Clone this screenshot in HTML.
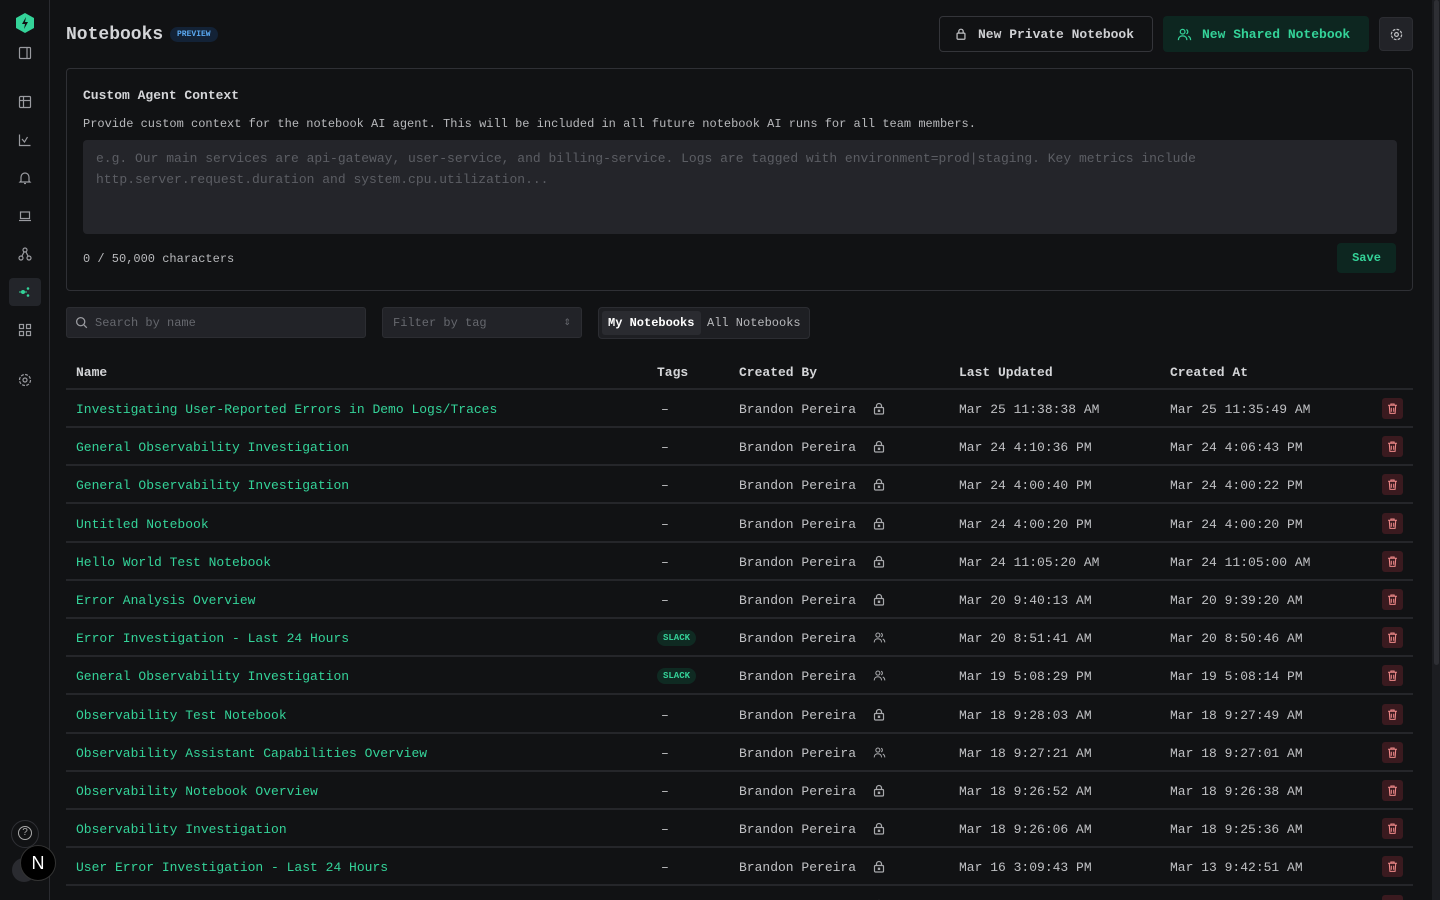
<!DOCTYPE html>
<html style="width:1440px;height:900px;overflow:hidden"><head><meta charset="utf-8"><style>
*{box-sizing:border-box;margin:0;padding:0}
body{width:1440px;height:900px;overflow:hidden;background:#111214;font-family:"Liberation Mono",monospace;color:#c9cacd;position:relative}
.abs{position:absolute}
.side{left:0;top:0;width:50px;height:900px;border-right:1px solid #2a2b30;background:#111214}
.ic{position:absolute;left:17px;width:16px;height:16px}
.ic svg{width:16px;height:16px;display:block}
.btn{position:absolute;height:36px;border-radius:4px;font-size:13px;font-weight:bold;display:flex;align-items:center}
.row{position:absolute;left:66px;width:1347px;height:38px;border-bottom:2px solid #25262a;font-size:13px}
.row span{position:absolute;top:12px;white-space:nowrap}
.nm{left:10px;color:#34d399}
.tg{left:595px;color:#c9cacd}
.by{left:673px;color:#c0c1c4}
.lk{left:807px;top:12px!important}
.lu{left:893px;color:#c0c1c4}
.ca{left:1104px;color:#c0c1c4}
.del{position:absolute;left:1316px;top:8px;width:21px;height:21px;background:#3a1a1f;border-radius:3px}
.slack{position:absolute;left:591px;top:11px;font-size:9px;font-weight:bold;color:#34d399;background:#0f2a22;border-radius:8px;padding:3px 6px}
</style></head><body>
<div class="abs side">
 <svg class="abs" style="left:14px;top:12px" width="22" height="22" viewBox="0 0 22 22"><polygon points="11,1 20,6 20,16 11,21 2,16 2,6" fill="#34d399"/><path d="M12 5 L8 12 H11 L10 17 L14 10 H11 Z" fill="#111214"/></svg>
 <div class="ic" style="top:45px"><svg viewBox="0 0 16 16" fill="none" stroke="#9a9ba0" stroke-width="1.2"><rect x="2.5" y="2.5" width="11" height="11" rx="1"/><line x1="10" y1="2.5" x2="10" y2="13.5"/></svg></div>
 <div class="ic" style="top:94px"><svg viewBox="0 0 16 16" fill="none" stroke="#9a9ba0" stroke-width="1.2"><rect x="2.5" y="2.5" width="11" height="11" rx="1"/><line x1="2.5" y1="6.5" x2="13.5" y2="6.5"/><line x1="6.5" y1="2.5" x2="6.5" y2="13.5"/></svg></div>
 <div class="ic" style="top:132px"><svg viewBox="0 0 16 16" fill="none" stroke="#9a9ba0" stroke-width="1.2"><path d="M2.5 2.5V13.5H13.5"/><path d="M5 7l2.5 3 3-5"/></svg></div>
 <div class="ic" style="top:170px"><svg viewBox="0 0 16 16" fill="none" stroke="#9a9ba0" stroke-width="1.2"><path d="M4 11V7a4 4 0 0 1 8 0v4l1 1H3z"/><path d="M7 13.5h2"/></svg></div>
 <div class="ic" style="top:208px"><svg viewBox="0 0 16 16" fill="none" stroke="#9a9ba0" stroke-width="1.2"><rect x="3.5" y="4" width="9" height="6.5"/><line x1="2" y1="12.5" x2="14" y2="12.5"/></svg></div>
 <div class="ic" style="top:246px"><svg viewBox="0 0 16 16" fill="none" stroke="#9a9ba0" stroke-width="1.2"><circle cx="8" cy="4" r="2"/><circle cx="4" cy="12" r="2"/><circle cx="12" cy="12" r="2"/><path d="M7 6l-2 4M9 6l2 4"/></svg></div>
 <div class="abs" style="left:9px;top:278px;width:32px;height:28px;background:#23252a;border-radius:4px"></div>
 <div class="ic" style="top:284px"><svg viewBox="0 0 16 16" fill="#34d399"><circle cx="6" cy="8" r="2"/><circle cx="11" cy="4.5" r="1.3"/><circle cx="11" cy="11.5" r="1.3"/><path d="M2 8h8" stroke="#34d399" stroke-width="1"/></svg></div>
 <div class="ic" style="top:322px"><svg viewBox="0 0 16 16" fill="none" stroke="#9a9ba0" stroke-width="1.2"><rect x="2.5" y="2.5" width="4" height="4"/><rect x="9.5" y="2.5" width="4" height="4"/><rect x="2.5" y="9.5" width="4" height="4"/><rect x="9.5" y="9.5" width="4" height="4"/></svg></div>
 <div class="ic" style="top:372px"><svg viewBox="0 0 16 16" fill="none" stroke="#9a9ba0" stroke-width="1.2"><circle cx="8" cy="8" r="2"/><circle cx="8" cy="8" r="5.5" stroke-dasharray="3 1.3"/></svg></div>
 <div class="abs" style="left:11px;top:820px;width:28px;height:28px;border-radius:50%;border:1px solid #2f3035"></div>
 <div class="abs" style="left:18px;top:826px;width:14px;height:14px;border-radius:50%;border:1.3px solid #aaa;font-size:10px;text-align:center;line-height:12px;color:#aaa;font-family:'Liberation Sans'">?</div>
 <div class="abs" style="left:12px;top:858px;width:24px;height:24px;border-radius:50%;background:#2a2b30"></div>
 <div class="abs" style="left:20px;top:845px;width:36px;height:36px;border-radius:50%;background:#000;border:1px solid #333;color:#fff;font-family:'Liberation Sans';font-size:18px;text-align:center;line-height:34px">N</div>
</div>
<div class="abs" style="left:1432px;top:0;width:8px;height:900px;background:#1c1d21"><div style="margin:0 auto;width:5px;height:665px;background:#2e2f34;border-radius:3px"></div></div>

<div class="abs" style="left:66px;top:25px;font-size:18px;font-weight:bold;color:#d4d5d8">Notebooks</div>
<div class="abs" style="left:170px;top:27px;height:15px;padding:0 7px;border-radius:8px;background:#132236;color:#5aa8f0;font-size:8px;font-weight:bold;line-height:15px">PREVIEW</div>

<div class="btn" style="left:939px;top:16px;width:214px;border:1px solid #34353a;color:#d0d1d4;padding-left:14px">
 <svg width="14" height="14" viewBox="0 0 16 16" fill="none" stroke="#c0c1c4" stroke-width="1.4"><rect x="3.5" y="7" width="9" height="7" rx="1"/><path d="M5.5 7V5a2.5 2.5 0 0 1 5 0v2"/></svg><span style="margin-left:10px">New Private Notebook</span></div>
<div class="btn" style="left:1163px;top:16px;width:206px;background:#0d2620;color:#34d399;padding-left:14px">
 <svg width="15" height="15" viewBox="0 0 16 16" fill="none" stroke="#34d399" stroke-width="1.3"><circle cx="6" cy="5" r="2.5"/><path d="M1.5 14c0-3 2-4.5 4.5-4.5S10.5 11 10.5 14"/><path d="M10 2.7a2.5 2.5 0 0 1 0 4.6M12 9.8c1.5.6 2.5 2 2.5 4.2"/></svg><span style="margin-left:10px">New Shared Notebook</span></div>
<div class="btn" style="left:1379px;top:17px;width:34px;height:34px;background:#222328;border:1px solid #2c2d32;justify-content:center">
 <svg width="15" height="15" viewBox="0 0 16 16" fill="none" stroke="#c0c1c4" stroke-width="1.3"><circle cx="8" cy="8" r="2"/><circle cx="8" cy="8" r="5.5" stroke-dasharray="3 1.3"/></svg></div>

<div class="abs" style="left:66px;top:68px;width:1347px;height:223px;border:1px solid #2f3035;border-radius:4px">
 <div class="abs" style="left:16px;top:19px;font-size:13px;font-weight:bold;color:#d4d5d8">Custom Agent Context</div>
 <div class="abs" style="left:16px;top:48px;font-size:12px;color:#b8b9bc;white-space:nowrap">Provide custom context for the notebook AI agent. This will be included in all future notebook AI runs for all team members.</div>
 <div class="abs" style="left:16px;top:71px;width:1314px;height:94px;background:#24252a;border-radius:4px;padding:8px 13px;font-size:13px;line-height:21px;color:#5c5e64;white-space:nowrap">e.g. Our main services are api-gateway, user-service, and billing-service. Logs are tagged with environment=prod|staging. Key metrics include<br>http.server.request.duration and system.cpu.utilization...</div>
 <div class="abs" style="left:16px;top:183px;font-size:12px;color:#b8b9bc">0 / 50,000 characters</div>
 <div class="abs" style="left:1270px;top:174px;width:59px;height:30px;background:#0d2620;border-radius:4px;color:#34d399;font-size:12px;font-weight:bold;text-align:center;line-height:31px">Save</div>
</div>

<div class="abs" style="left:66px;top:307px;width:300px;height:31px;background:#222328;border:1px solid #2c2d32;border-radius:3px;font-size:12px;color:#66686e;line-height:30px;padding-left:28px">Search by name
 <svg class="abs" style="left:8px;top:8px" width="13" height="13" viewBox="0 0 16 16" fill="none" stroke="#9a9ba0" stroke-width="1.6"><circle cx="7" cy="7" r="5"/><path d="M11 11l3.5 3.5"/></svg></div>
<div class="abs" style="left:382px;top:307px;width:200px;height:31px;background:#222328;border:1px solid #2c2d32;border-radius:3px;font-size:12px;color:#66686e;line-height:30px;padding-left:10px">Filter by tag<span class="abs" style="right:10px;top:0;font-size:9px;color:#66686e">⇕</span></div>
<div class="abs" style="left:598px;top:307px;width:212px;height:32px;background:#1e1f23;border:1px solid #2c2d32;border-radius:4px;font-size:12px">
 <div class="abs" style="left:3px;top:3px;width:99px;height:24px;background:#2a2b30;border-radius:3px;color:#fff;font-weight:bold;line-height:25px;padding-left:6px">My Notebooks</div>
 <div class="abs" style="left:108px;top:3px;line-height:25px;color:#b8b9bc">All Notebooks</div>
</div>

<div class="abs" style="left:66px;top:352px;width:1347px;height:38px;border-bottom:2px solid #25262a;font-size:13px;font-weight:bold;color:#d4d5d8">
 <span class="abs" style="left:10px;top:13px">Name</span><span class="abs" style="left:591px;top:13px">Tags</span><span class="abs" style="left:673px;top:13px">Created By</span><span class="abs" style="left:893px;top:13px">Last Updated</span><span class="abs" style="left:1104px;top:13px">Created At</span>
</div>
<div id="rows"></div>
<script>
const L='<svg width="12" height="13" viewBox="0 0 12 13" fill="none" stroke="#a8a9ac" stroke-width="1.2"><rect x="1.5" y="5.5" width="9" height="6.5" rx="1"/><path d="M3.5 5.5V4a2.5 2.5 0 0 1 5 0v1.5"/><rect x="5.4" y="8.2" width="1.2" height="1.2" fill="#a8a9ac"/></svg>';
const S='<svg width="13" height="13" viewBox="0 0 16 16" fill="none" stroke="#a8a9ac" stroke-width="1.3"><circle cx="6" cy="5" r="2.5"/><path d="M1.5 14c0-3 2-4.5 4.5-4.5S10.5 11 10.5 14"/><path d="M10 2.7a2.5 2.5 0 0 1 0 4.6M12 9.8c1.5.6 2.5 2 2.5 4.2"/></svg>';
const T='<svg style="margin:4px 0 0 4px;display:block" width="13" height="13" viewBox="0 0 16 16" fill="none" stroke="#f08a8a" stroke-width="1.3"><path d="M2.5 4h11M6 4V2.5h4V4M4 4l.8 10h6.4L12 4"/><path d="M6.5 7v5M9.5 7v5"/></svg>';
const d=[["Investigating User-Reported Errors in Demo Logs/Traces",0,L,"Mar 25 11:38:38 AM","Mar 25 11:35:49 AM"],
["General Observability Investigation",0,L,"Mar 24 4:10:36 PM","Mar 24 4:06:43 PM"],
["General Observability Investigation",0,L,"Mar 24 4:00:40 PM","Mar 24 4:00:22 PM"],
["Untitled Notebook",0,L,"Mar 24 4:00:20 PM","Mar 24 4:00:20 PM"],
["Hello World Test Notebook",0,L,"Mar 24 11:05:20 AM","Mar 24 11:05:00 AM"],
["Error Analysis Overview",0,L,"Mar 20 9:40:13 AM","Mar 20 9:39:20 AM"],
["Error Investigation - Last 24 Hours",1,S,"Mar 20 8:51:41 AM","Mar 20 8:50:46 AM"],
["General Observability Investigation",1,S,"Mar 19 5:08:29 PM","Mar 19 5:08:14 PM"],
["Observability Test Notebook",0,L,"Mar 18 9:28:03 AM","Mar 18 9:27:49 AM"],
["Observability Assistant Capabilities Overview",0,S,"Mar 18 9:27:21 AM","Mar 18 9:27:01 AM"],
["Observability Notebook Overview",0,L,"Mar 18 9:26:52 AM","Mar 18 9:26:38 AM"],
["Observability Investigation",0,L,"Mar 18 9:26:06 AM","Mar 18 9:25:36 AM"],
["User Error Investigation - Last 24 Hours",0,L,"Mar 16 3:09:43 PM","Mar 13 9:42:51 AM"],
["Observability Notebook",0,L,"Mar 16 3:00:00 PM","Mar 13 9:40:00 AM"]];
let h='';d.forEach((r,i)=>{h+=`<div class="row" style="top:${390+i*38.2}px"><span class="nm">${r[0]}</span>${r[1]?'<div class="slack">SLACK</div>':'<span class="tg">–</span>'}<span class="by">Brandon Pereira</span><span class="lk">${r[2]}</span><span class="lu">${r[3]}</span><span class="ca">${r[4]}</span><div class="del">${T}</div></div>`});
document.getElementById('rows').innerHTML=h;
</script>
</body></html>
